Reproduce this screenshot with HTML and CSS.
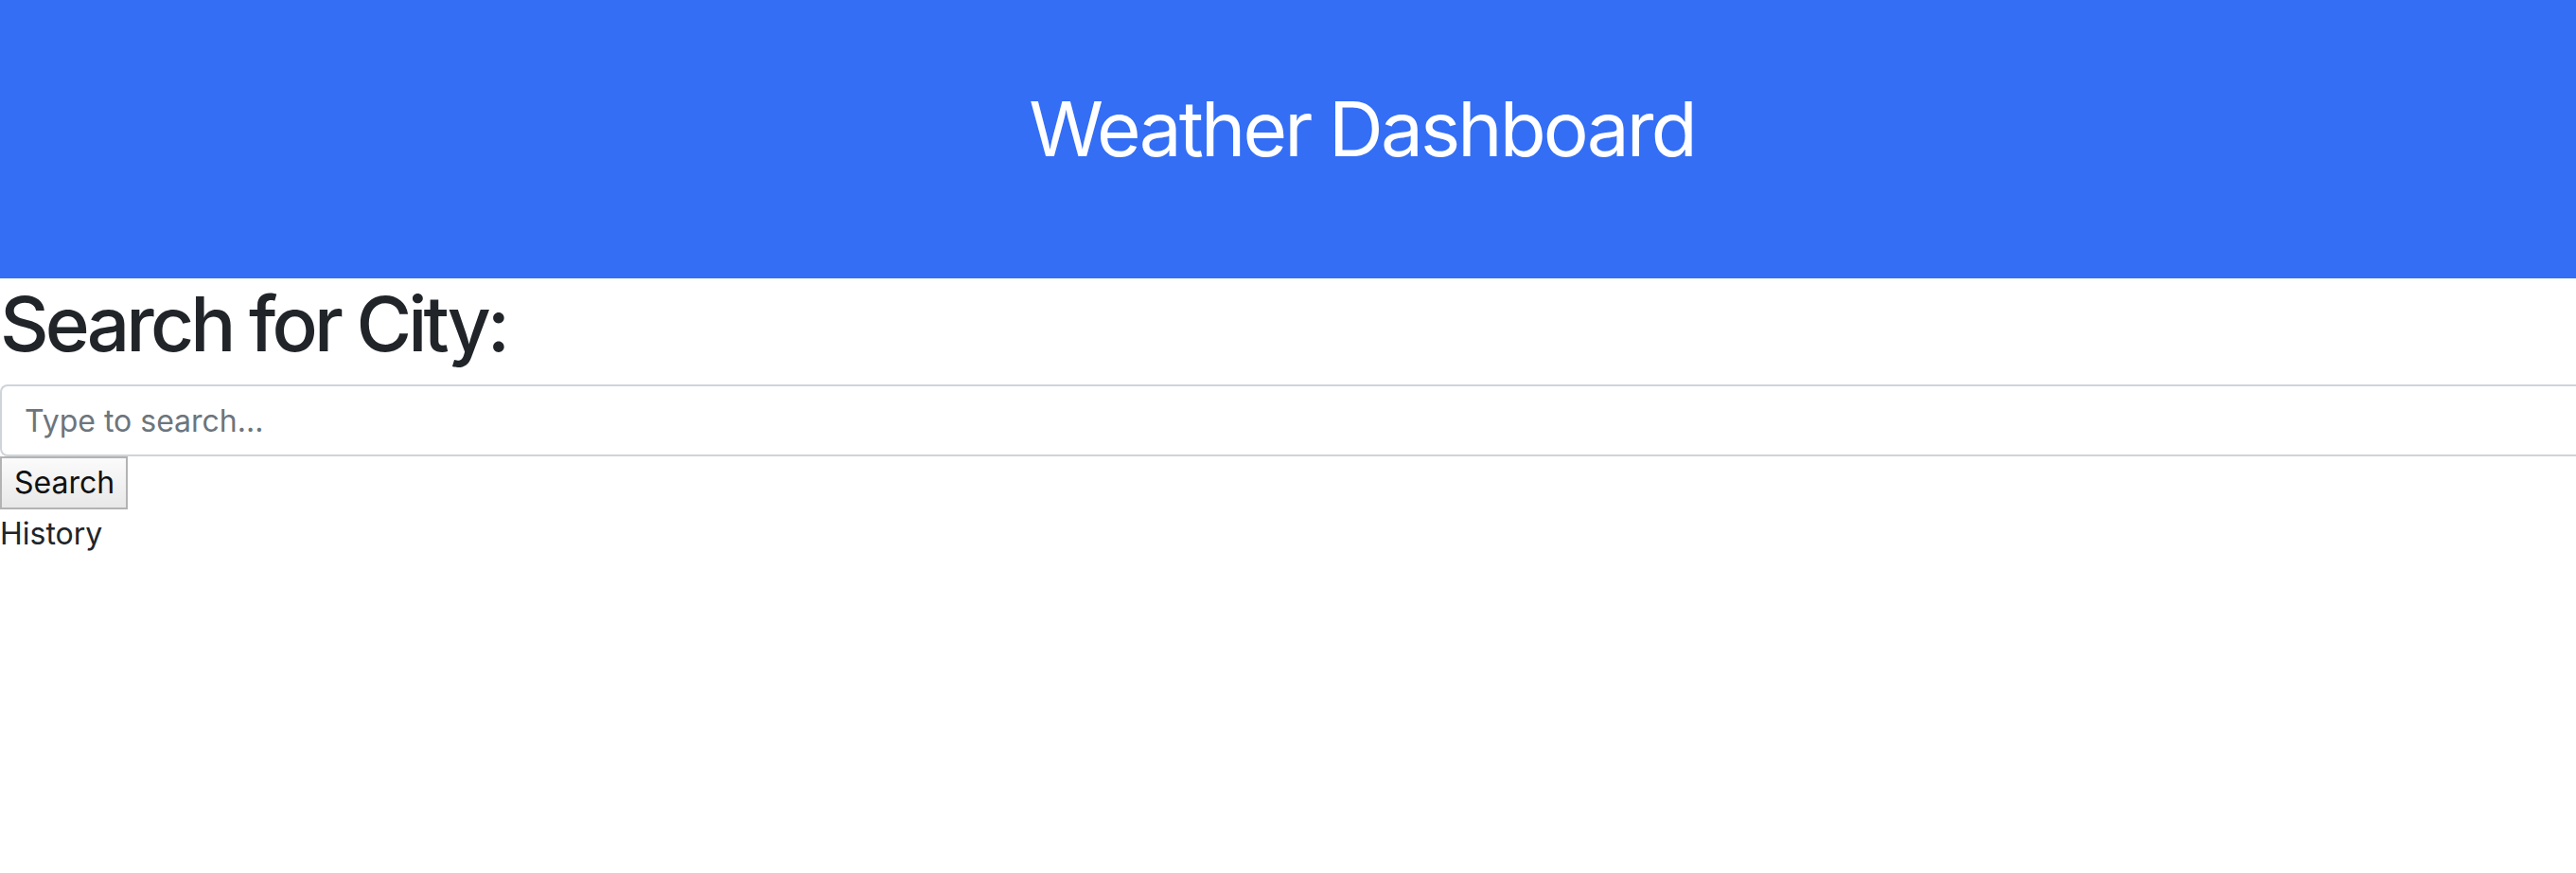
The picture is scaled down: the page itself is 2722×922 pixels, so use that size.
FILE: index.html
```html
<!DOCTYPE html>
<html lang="en">
<head>
<meta charset="utf-8">
<title>Weather Dashboard</title>
<link rel="stylesheet" href="styles.css">
</head>
<body>
<header class="header">
  <h1 class="header-title">Weather Dashboard</h1>
</header>
<main class="search">
  <h1 class="search-title">Search for City:</h1>
  <input class="search-input" type="text" placeholder="Type to search...">
  <button class="search-btn" type="button">Search</button>
  <div class="history">History</div>
</main>
</body>
</html>
```

FILE: styles.css
```css
html, body {
  margin: 0;
  padding: 0;
}
body {
  font-family: Inter, "Noto Sans", "Liberation Sans", sans-serif;
  font-size: 32px;
  line-height: 1.5;
  color: #212529;
  background: #ffffff;
}
.header {
  background: #336ef5;
  height: 294px;
  box-sizing: border-box;
  padding-top: 88px;
  padding-left: 156px;
  text-align: center;
  color: #ffffff;
}
.header-title {
  margin: 0;
  font-size: 80px;
  line-height: 96px;
  font-weight: 400;
  letter-spacing: -0.036em;
}
.search {
  display: flex;
  flex-direction: column;
  align-items: flex-start;
}
.search-title {
  margin: 0 0 16px 0;
  font-size: 80px;
  line-height: 96px;
  font-weight: 500;
  letter-spacing: -0.048em;
}
.search-input {
  box-sizing: border-box;
  align-self: stretch;
  height: 76px;
  margin: 0;
  padding: 12px 24px;
  font-family: inherit;
  font-size: 32px;
  line-height: 48px;
  color: #495057;
  background: #fff;
  border: 2px solid #ced4da;
  border-right: none;
  border-radius: 8px 0 0 8px;
  outline: none;
}
.search-input::placeholder {
  color: #6c757d;
}
.search-btn {
  margin: 0;
  padding: 2px 12px 2px 13px;
  font-family: inherit;
  font-size: 32px;
  line-height: 48px;
  color: #111;
  background: linear-gradient(#fbfbfb, #e8e8e8);
  border: 2px solid #b3b3b3;
  border-radius: 0;
}
.history {
  padding-top: 2px;
  line-height: 48px;
}
```
